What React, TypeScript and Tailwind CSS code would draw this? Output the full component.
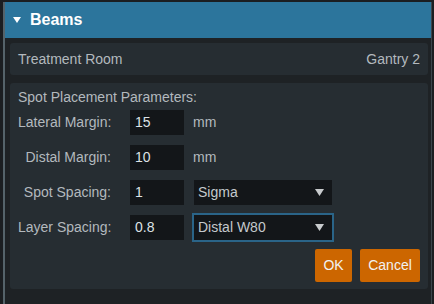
import React from 'react';

const font = { fontFamily: '"Liberation Sans", Arial, sans-serif' };

function Caret({ className, w = 9, h = 7 }: { className?: string; w?: number; h?: number }) {
  return (
    <svg width={w} height={h} viewBox={`0 0 ${w} ${h}`} className={className}>
      <path d={`M0 0 H${w} L${w / 2} ${h} Z`} fill="currentColor" />
    </svg>
  );
}

function NumberField({ value }: { value: string }) {
  return (
    <div className="w-[54px] h-[25px] bg-[#131619] pl-[5px] flex items-center text-[14px] text-[#dde2e6]">
      {value}
    </div>
  );
}

function SelectField({ value, focused }: { value: string; focused?: boolean }) {
  return (
    <div
      className={`w-[138px] h-[25px] bg-[#131619] pl-[4px] pr-[8px] flex items-center justify-between text-[14px] text-[#c4c9cd] ${
        focused ? 'ring-2 ring-[#2a6488]' : ''
      }`}
    >
      <span>{value}</span>
      <Caret className="text-[#c8cbcd]" />
    </div>
  );
}

function Row({ label, children }: { label: string; children: React.ReactNode }) {
  return (
    <div className="flex items-center h-[25px]">
      <div className="w-[93px] shrink-0 whitespace-nowrap text-right text-[14px] text-[#b3b9be]">{label}</div>
      <div className="ml-[19px] flex items-center">{children}</div>
    </div>
  );
}

export default function App() {
  return (
    <div className="w-[434px] h-[304px] bg-[#1b1e21] pt-[2px] pl-[3px] overflow-hidden" style={font}>
      <div className="w-[429px] h-[302px] bg-[#1e2225] border-l-2 border-r border-l-[#55636a] border-r-[#3b454b]">
        <div className="h-[36px] bg-[#2c759c] flex items-center pl-[8px]">
          <Caret className="text-white" w={8} h={6} />
          <span className="ml-[9px] text-[16px] font-bold text-white">Beams</span>
        </div>

        <div className="pl-[5px] pr-[3px] pt-[5px] flex flex-col gap-[8px]">
          <div className="h-[32px] rounded-[3px] bg-[#262d32] px-[8px] flex items-center justify-between text-[14px] text-[#b3b9be]">
            <span>Treatment Room</span>
            <span>Gantry 2</span>
          </div>

          <div className="rounded-[3px] bg-[#262d32] px-[8px] pt-[6px] pb-[7px]">
            <div className="text-[14px] text-[#b3b9be] leading-[16px]">Spot Placement Parameters:</div>
            <div className="mt-[5px] flex flex-col gap-[10px]">
              <Row label="Lateral Margin:">
                <NumberField value="15" />
                <span className="ml-[9px] text-[14px] text-[#b3b9be]">mm</span>
              </Row>
              <Row label="Distal Margin:">
                <NumberField value="10" />
                <span className="ml-[9px] text-[14px] text-[#b3b9be]">mm</span>
              </Row>
              <Row label="Spot Spacing:">
                <NumberField value="1" />
                <div className="ml-[10px]">
                  <SelectField value="Sigma" />
                </div>
              </Row>
              <Row label="Layer Spacing:">
                <NumberField value="0.8" />
                <div className="ml-[10px]">
                  <SelectField value="Distal W80" focused />
                </div>
              </Row>
            </div>
            <div className="mt-[9px] flex justify-end gap-[8px]">
              <button className="h-[33px] w-[37px] rounded-[2px] bg-[#cc6600] text-[14px] text-[#f2f2f2] flex items-center justify-center">
                OK
              </button>
              <button className="h-[33px] w-[60px] rounded-[2px] bg-[#cc6600] text-[14px] text-[#f2f2f2] flex items-center justify-center">
                Cancel
              </button>
            </div>
          </div>
        </div>
      </div>
    </div>
  );
}
